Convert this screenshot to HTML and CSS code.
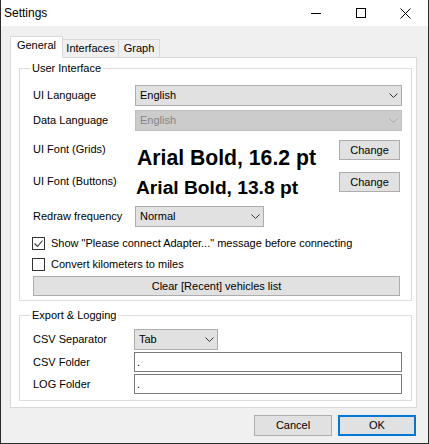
FILE: index.html
```html
<!DOCTYPE html>
<html>
<head>
<meta charset="utf-8">
<title>Settings</title>
<link rel="stylesheet" href="styles.css">
</head>
<body>
<div class="window">
  <div class="titlebar">
    <span class="title">Settings</span>
    <div class="controls">
      <span class="ctl"><svg width="10" height="10" viewBox="0 0 10 10"><path d="M0 5.5H10" stroke="#000" stroke-width="1"/></svg></span>
      <span class="ctl"><svg width="10" height="10" viewBox="0 0 10 10"><rect x="0.5" y="0.5" width="9" height="9" fill="none" stroke="#000"/></svg></span>
      <span class="ctl"><svg width="11" height="11" viewBox="0 0 11 11"><path d="M0.5 0.5L10.5 10.5M10.5 0.5L0.5 10.5" fill="none" stroke="#000"/></svg></span>
    </div>
  </div>
  <div class="client">
    <div class="tabs">
      <div class="tab active t-general">General</div>
      <div class="tab t-interfaces">Interfaces</div>
      <div class="tab t-graph">Graph</div>
    </div>
    <div class="panel">
      <fieldset class="group">
        <legend>User Interface</legend>
        <div class="rows rows-ui">
          <div class="row">
            <span class="label">UI Language</span>
            <div class="combo wide">English<svg class="chev" width="9" height="5" viewBox="0 0 9 5"><path d="M0.5 0.5L4.5 4.5L8.5 0.5" fill="none" stroke="#333"/></svg></div>
          </div>
          <div class="row gap4">
            <span class="label">Data Language</span>
            <div class="combo wide disabled">English<svg class="chev" width="9" height="5" viewBox="0 0 9 5"><path d="M0.5 0.5L4.5 4.5L8.5 0.5" fill="none" stroke="#a8a8a8"/></svg></div>
          </div>
          <div class="fontrow first">
            <span class="label">UI Font (Grids)</span>
            <span class="bigfont">Arial Bold, 16.2 pt</span>
            <div class="btn change">Change</div>
          </div>
          <div class="fontrow second">
            <span class="label">UI Font (Buttons)</span>
            <span class="bigfont small">Arial Bold, 13.8 pt</span>
            <div class="btn change">Change</div>
          </div>
          <div class="row gap4">
            <span class="label">Redraw frequency</span>
            <div class="combo short">Normal<svg class="chev" width="9" height="5" viewBox="0 0 9 5"><path d="M0.5 0.5L4.5 4.5L8.5 0.5" fill="none" stroke="#333"/></svg></div>
          </div>
          <div class="check first-check">
            <span class="box"><svg width="11" height="11" viewBox="0 0 11 11"><path d="M1.5 5.5L4.5 8.5L9.5 2.5" fill="none" stroke="#333" stroke-width="1.1"/></svg></span>
            <span>Show "Please connect Adapter..." message before connecting</span>
          </div>
          <div class="check">
            <span class="box"></span>
            <span>Convert kilometers to miles</span>
          </div>
          <div class="btn clear">Clear [Recent] vehicles list</div>
        </div>
      </fieldset>
      <fieldset class="group g2">
        <legend>Export &amp; Logging</legend>
        <div class="rows rows-export">
          <div class="row">
            <span class="label l2">CSV Separator</span>
            <div class="combo sep">Tab<svg class="chev" width="9" height="5" viewBox="0 0 9 5"><path d="M0.5 0.5L4.5 4.5L8.5 0.5" fill="none" stroke="#333"/></svg></div>
          </div>
          <div class="row tbrow">
            <span class="label l2">CSV Folder</span>
            <div class="textbox">.</div>
          </div>
          <div class="row tbrow">
            <span class="label l2">LOG Folder</span>
            <div class="textbox">.</div>
          </div>
        </div>
      </fieldset>
    </div>
    <div class="footer">
      <div class="btn dlgbtn">Cancel</div>
      <div class="btn dlgbtn default">OK</div>
    </div>
  </div>
</div>
</body>
</html>
```

FILE: styles.css
```css
* { box-sizing: border-box; }
html, body { margin: 0; padding: 0; }
body {
  font-family: "Liberation Sans", Arial, sans-serif;
  font-size: 11px;
  line-height: 13px;
  color: #000;
  background: #fff;
}
.window {
  width: 429px;
  height: 444px;
  border: 1px solid #2b2b2b;
  border-top: none;
  background: #f0f0f0;
  display: flex;
  flex-direction: column;
}
.titlebar {
  height: 26px;
  flex: none;
  background: #fff;
  display: flex;
  align-items: center;
}
.title {
  flex: 1;
  padding-left: 3px;
  font-size: 12px;
  line-height: 14px;
}
.controls { display: flex; height: 26px; }
.ctl {
  width: 45px;
  height: 26px;
  display: flex;
  align-items: center;
  justify-content: center;
}
.ctl svg { display: block; }
.client {
  flex: 1;
  padding: 10px 0 0 9px;
}
.tabs {
  display: flex;
  align-items: flex-end;
  height: 21px;
}
.tab {
  height: 18px;
  border: 1px solid #d9d9d9;
  border-bottom: none;
  background: #f0f0f0;
  padding-top: 2px;
  text-align: center;
  margin-left: -1px;
}
.tab.active {
  height: 22px;
  margin-left: 0;
  margin-bottom: -1px;
  background: #fff;
  position: relative;
  z-index: 1;
}
.t-general { width: 53px; }
.t-interfaces { width: 57px; }
.t-graph { width: 42px; }
.panel {
  width: 407px;
  height: 351px;
  border: 1px solid #d9d9d9;
  background: #fff;
  padding: 4px 4px 0 8px;
}
.group {
  margin: 0;
  padding: 0;
  min-width: 0;
  border: 1px solid #dcdcdc;
}
.group legend {
  margin-left: 10px;
  padding: 0 2px;
  line-height: 13px;
}
.g2 { margin-top: 8px; }
.rows-ui { padding: 10px 9px 4px 13px; }
.rows-export { padding: 7px 9px 6px 13px; }
.row {
  display: flex;
  align-items: center;
  height: 21px;
}
.gap4 { margin-top: 4px; }
.label { width: 102px; flex: none; white-space: nowrap; }
.label.l2 { width: 101px; }
.combo {
  height: 21px;
  border: 1px solid #adadad;
  background: #e1e1e1;
  display: flex;
  align-items: center;
  padding-left: 4px;
}
.combo .chev { margin-left: auto; margin-right: 3px; display: block; }
.combo.wide { flex: 1; }
.combo.disabled {
  background: #cccccc;
  border-color: #bfbfbf;
  color: #838383;
}
.combo.short { width: 129px; }
.combo.sep { width: 84px; }
.fontrow {
  display: flex;
  align-items: flex-start;
}
.fontrow.first { margin-top: 9px; height: 32px; }
.fontrow.second { height: 30px; }
.fontrow .label { margin-top: 3px; }
.bigfont {
  flex: 1;
  font-weight: bold;
  font-size: 21.2px;
  line-height: 26px;
  margin-top: 5px;
  padding-left: 2px;
  white-space: nowrap;
}
.bigfont.small {
  font-size: 19.2px;
  line-height: 22px;
  margin-top: 5px;
  padding-left: 1px;
}
.btn {
  border: 1px solid #adadad;
  background: #e1e1e1;
  display: flex;
  align-items: center;
  justify-content: center;
}
.change { width: 61px; height: 20px; margin-right: 2px; flex: none; }
.check {
  display: flex;
  align-items: center;
  height: 17px;
  margin-top: 4px;
  margin-left: -1px;
}
.check.first-check { margin-top: 8px; }
.box {
  width: 13px;
  height: 13px;
  border: 1px solid #333;
  background: #fff;
  margin-right: 6px;
  flex: none;
}
.box svg { display: block; }
.clear { height: 20px; margin: 3px 2px 0 0; }
.tbrow { margin-top: 2px; height: 20px; }
.textbox {
  flex: 1;
  height: 20px;
  border: 1px solid #7a7a7a;
  background: #fff;
  padding-left: 2px;
  display: flex;
  align-items: center;
}
.footer {
  display: flex;
  justify-content: flex-end;
  gap: 6px;
  padding: 7px 12px 0 0;
}
.dlgbtn { width: 78px; height: 21px; }
.dlgbtn.default { border: 2px solid #0078d7; }
```
